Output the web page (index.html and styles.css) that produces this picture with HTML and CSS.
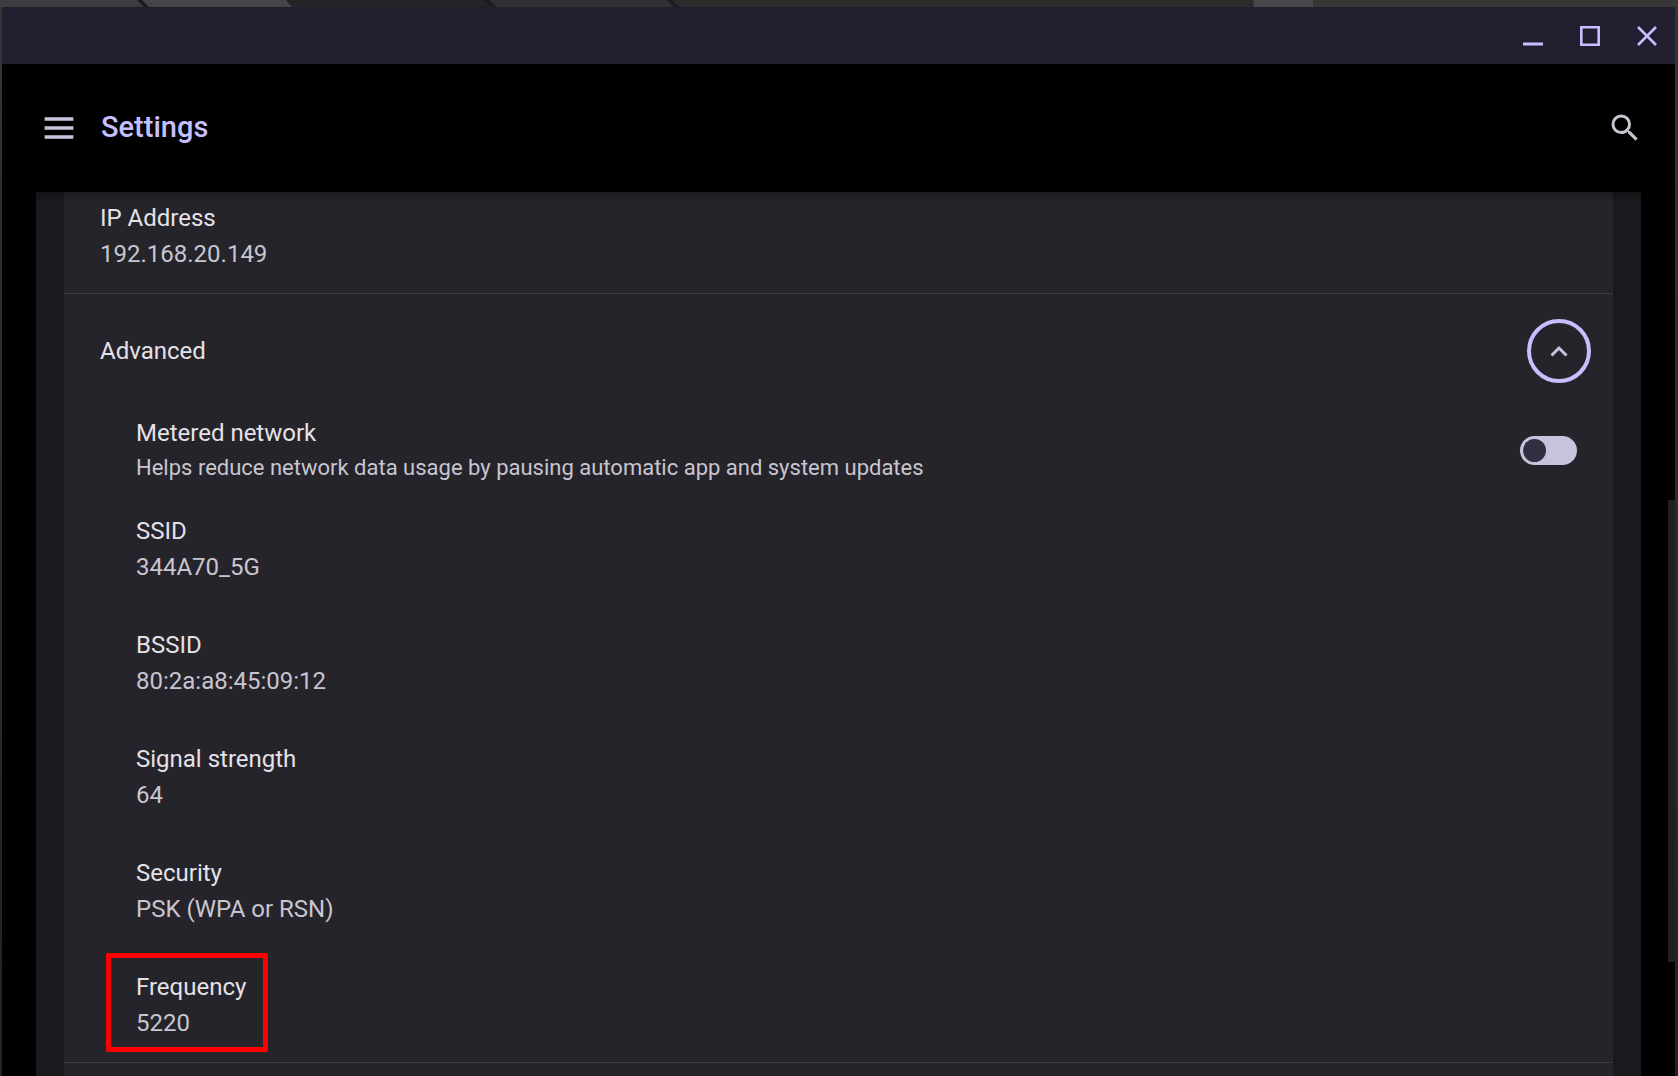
FILE: index.html
```html
<!DOCTYPE html>
<html lang="en">
<head>
    <meta charset="UTF-8">
    <meta name="viewport" content="width=device-width, initial-scale=1.0">
    <title>Settings</title>
    <link rel="stylesheet" href="styles.css">
</head>
<body>
    <svg class="wallpaper" viewBox="0 0 1678 7" preserveAspectRatio="none" aria-hidden="true">
        <rect width="1678" height="7" fill="#2b2b2c"/>
        <path d="M0 0h137l7 7H0z" fill="#3d3d3f"/>
        <path d="M137 0h149l6 7H144z" fill="#454649"/>
        <path d="M286 0h202l7 7H292z" fill="#242426"/>
        <path d="M488 0h182l7 7H495z" fill="#303032"/>
        <path d="M137 0h5l7 7h-5zM484 0h5l7 7h-5zM667 0h5l7 7h-5z" fill="#1c1c1e"/>
        <path d="M1253 0h60v7h-59z" fill="#48484a"/>
        <path d="M1313 0h365v7h-365z" fill="#373738"/>
    </svg>
    <div class="window">
        <div class="titlebar">
            <button class="window-button" aria-label="Minimize">
                <svg width="20" height="20" viewBox="0 0 20 20"><path d="M0 18h20" stroke="currentColor" stroke-width="3"/></svg>
            </button>
            <button class="window-button" aria-label="Maximize">
                <svg width="20" height="20" viewBox="0 0 20 20"><path d="M1.3 1.3h17.4v17.4H1.3z" fill="none" stroke="currentColor" stroke-width="2.6"/></svg>
            </button>
            <button class="window-button" aria-label="Close">
                <svg width="20" height="20" viewBox="0 0 20 20"><path d="M1 1l18 18M19 1L1 19" stroke="currentColor" stroke-width="2.6"/></svg>
            </button>
        </div>
        <header class="toolbar">
            <button class="icon-button" aria-label="Main menu">
                <svg width="36" height="36" viewBox="0 0 20 20" fill="currentColor"><path d="M2 4h16v2H2zM2 9h16v2H2zM2 14h16v2H2z"/></svg>
            </button>
            <h1 class="title">Settings</h1>
            <button class="icon-button search" aria-label="Search settings">
                <svg width="36" height="36" viewBox="0 0 24 24" fill="currentColor"><path d="M15.5 14h-.79l-.28-.27A6.471 6.471 0 0 0 16 9.5 6.5 6.5 0 1 0 9.5 16c1.61 0 3.09-.59 4.23-1.57l.27.28v.79l5 4.99L20.49 19l-4.99-5zm-6 0C7.01 14 5 11.99 5 9.5S7.01 5 9.5 5 14 7.01 14 9.5 11.99 14 9.5 14z"/></svg>
            </button>
        </header>
        <main class="panel">
            <div class="card">
                <div class="row ip">
                    <div class="label">IP Address</div>
                    <div class="value">192.168.20.149</div>
                </div>
                <div class="row advanced">
                    <div class="label">Advanced</div>
                    <button class="expand" aria-label="Advanced" aria-expanded="true">
                        <svg width="18" height="12" viewBox="0 0 18 12"><path d="M1.5 10.5L9 3l7.5 7.5" fill="none" stroke="currentColor" stroke-width="3"/></svg>
                    </button>
                </div>
                <div class="details">
                    <div class="row metered">
                        <label for="metered">
                            <span class="label">Metered network</span>
                            <span class="hint">Helps reduce network data usage by pausing automatic app and system updates</span>
                        </label>
                        <input type="checkbox" role="switch" class="toggle" id="metered">
                    </div>
                    <div class="row">
                        <div class="label">SSID</div>
                        <div class="value">344A70_5G</div>
                    </div>
                    <div class="row">
                        <div class="label">BSSID</div>
                        <div class="value">80:2a:a8:45:09:12</div>
                    </div>
                    <div class="row">
                        <div class="label">Signal strength</div>
                        <div class="value">64</div>
                    </div>
                    <div class="row">
                        <div class="label">Security</div>
                        <div class="value">PSK (WPA or RSN)</div>
                    </div>
                    <div class="row frequency">
                        <div class="label">Frequency</div>
                        <div class="value">5220</div>
                    </div>
                </div>
            </div>
        </main>
        <div class="scroll-thumb"></div>
    </div>
</body>
</html>
```
FILE: styles.css
```css
*,
*::before,
*::after {
    box-sizing: border-box;
}
body {
    margin: 0;
    padding: 7px 3px 0 2px;
    height: 100vh;
    overflow: hidden;
    background: linear-gradient(#343436, #232325);
    font-family: Roboto, "Open Sans", sans-serif;
    font-size: 24px;
    line-height: 36px;
    color: #e5e1e9;
}
button {
    display: flex;
    align-items: center;
    justify-content: center;
    padding: 0;
    border: none;
    background: none;
    cursor: pointer;
}
.wallpaper {
    position: absolute;
    top: 0;
    left: 0;
    width: 100%;
    height: 7px;
}
.window {
    position: relative;
    display: flex;
    flex-direction: column;
    height: 100%;
    background: #000;
    border-radius: 4px 4px 0 0;
    overflow: hidden;
}
.titlebar {
    display: flex;
    justify-content: flex-end;
    flex-shrink: 0;
    background: #201e2f;
}
.window-button {
    width: 57px;
    height: 57px;
    color: #c6bfff;
}
.toolbar {
    display: flex;
    align-items: center;
    flex-shrink: 0;
    gap: 24px;
    height: 128px;
    padding: 0 32px 0 39px;
}
.icon-button {
    width: 36px;
    height: 36px;
    color: #c8c3dc;
}
.search {
    margin-left: auto;
    color: #c9c5d0;
}
.title {
    margin: 0;
    padding-bottom: 3px;
    font-size: 29px;
    font-weight: 500;
    color: #c6bfff;
}
.panel {
    flex: 1;
    min-height: 0;
    margin: 0 34px;
    padding: 0 28px;
    background: #1a191e;
    position: relative;
    overflow: hidden;
}
/* shadow under the toolbar */
.panel::before {
    content: "";
    position: absolute;
    top: 0;
    left: 0;
    right: 0;
    height: 10px;
    background: linear-gradient(rgba(0, 0, 0, 0.3), transparent);
}
.card {
    min-height: 100%;
    background: #25242a;
}
.row {
    padding: 21px 36px;
}
.ip {
    padding-top: 8px;
    border-bottom: 1px solid #3c3b41;
}
.value {
    color: #c9c5d0;
}
.advanced {
    display: flex;
    align-items: center;
    justify-content: space-between;
    height: 114px;
    padding-right: 22px;
}
.expand {
    width: 64px;
    height: 64px;
    border: 4px solid #c6bfff;
    border-radius: 50%;
    color: #c8c3dc;
}
.details {
    padding-left: 36px;
    border-bottom: 1px solid #3c3b41;
}
.metered {
    display: flex;
    align-items: center;
    justify-content: space-between;
    padding-top: 7px;
    padding-bottom: 7px;
}
.metered .label,
.hint {
    display: block;
}
.hint {
    font-size: 22px;
    line-height: 34px;
    color: #c9c5d0;
}
.toggle {
    appearance: none;
    display: flex;
    align-items: center;
    width: 57px;
    height: 29px;
    margin: 0;
    padding: 0 3px;
    border-radius: 15px;
    background: #c8c3dc;
    cursor: pointer;
}
.toggle::before {
    content: "";
    width: 23px;
    height: 23px;
    border-radius: 50%;
    background: #312f42;
}
.toggle:checked {
    justify-content: flex-end;
    background: #c6bfff;
}
.frequency {
    position: relative;
}
/* red highlight box around the frequency */
.frequency::after {
    content: "";
    position: absolute;
    top: 5px;
    left: 6px;
    width: 162px;
    height: 99px;
    border: 5px solid #f00;
    border-radius: 2px;
}
.scroll-thumb {
    position: absolute;
    top: 493px;
    right: 0;
    width: 7px;
    height: 462px;
    background: #202020;
}
```
